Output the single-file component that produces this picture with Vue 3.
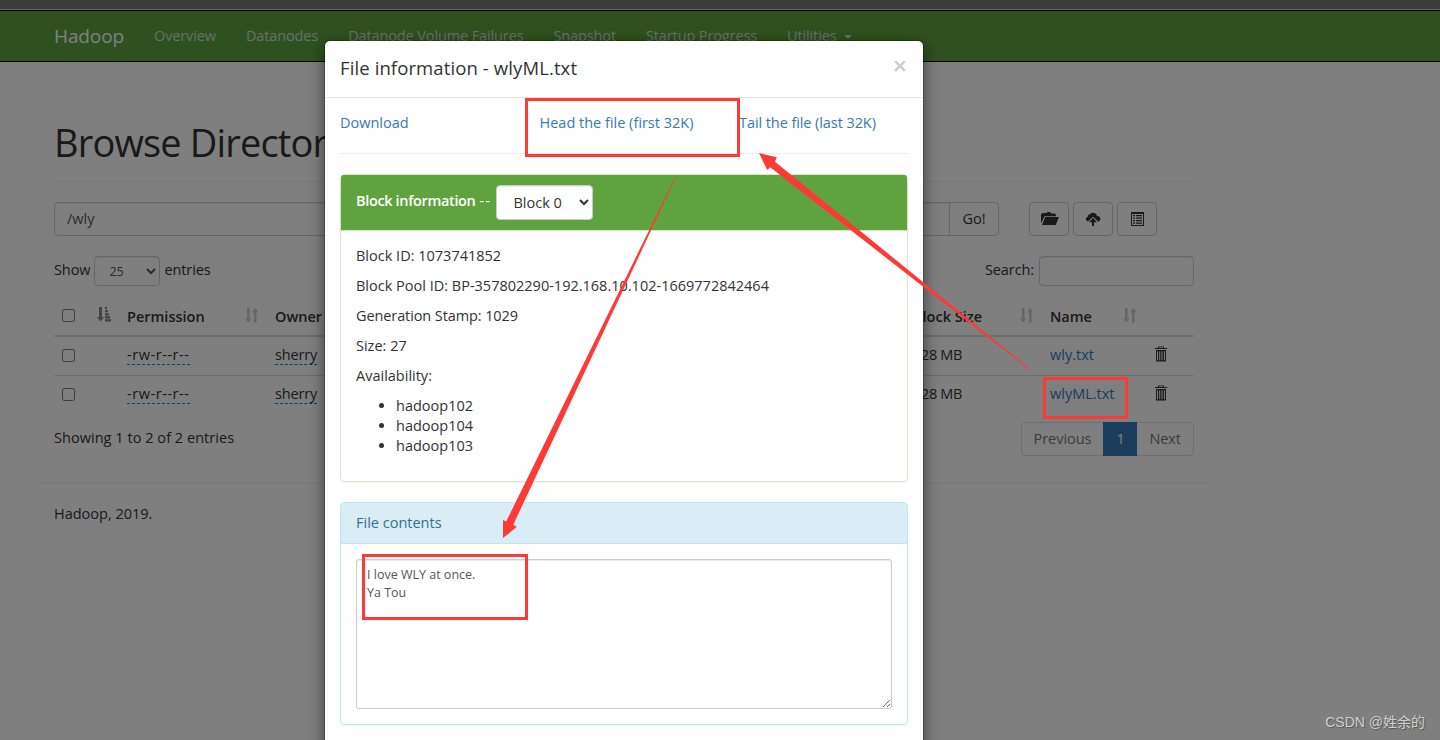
<template>
  <div class="screen">
    <div class="browser-edge"></div>
    <div class="page">
      <nav class="navbar">
        <div class="container nav-inner">
          <a class="brand">Hadoop</a>
          <a v-for="item in navItems" :key="item" class="nav-link">{{ item }}</a>
          <a class="nav-link">Utilities <span class="caret"></span></a>
        </div>
      </nav>

      <div class="container content">
        <h1>Browse Directory</h1>

        <div class="path-row">
          <div class="input-group">
            <input v-model="path" class="form-control" type="text">
            <button class="btn go">Go!</button>
          </div>
          <button class="btn icon-btn">
            <svg width="18" height="14" viewBox="0 0 18 14">
              <path d="M0 11.500V2.500L1.500 1h4L6.500 0h2.500l1 1.500h4L15 3v1.200H3.500z M4.200 5H18l-3.300 8H1z" />
            </svg>
          </button>
          <button class="btn icon-btn cloud">
            <svg width="16" height="16" viewBox="0 0 16 16">
              <path d="M3 10.500A3 3 0 0 1 .8 8.200c0-1.300.8-2.200 2-2.500C2.800 4 3.900 3.100 5.200 3.300 5.900 2.200 7 1.800 8.200 1.800c2 0 3.400 1.300 3.800 3.300 1.900 0 3.400 1.200 3.400 2.900 0 1.200-.8 2.200-2.200 2.500L8 5.800z" />
              <path d="M8 7l4 4.300H9V15H7v-3.700H4z" />
            </svg>
          </button>
          <button class="btn icon-btn">
            <svg width="14" height="15" viewBox="0 0 14 15">
              <path fill-rule="evenodd" d="M0 0h13v14H0z M1 2v11h11V2z" />
              <path d="M2 3h2v1.300H2z M5 3h6v1.300H5z M2 5.500h2v1.300H2z M5 5.500h6v1.300H5z M2 8h2v1.300H2z M5 8h6v1.300H5z M2 10.500h2v1.300H2z M5 10.500h6v1.300H5z" />
            </svg>
          </button>
        </div>

        <div class="table-tools">
          <label>Show
            <select class="form-control small-select"><option>25</option></select>
            entries</label>
          <label class="search">Search: <input class="form-control" type="text"></label>
        </div>

        <table>
          <colgroup>
            <col v-for="(w, i) in columnWidths" :key="i" :style="{ width: w + 'px' }">
          </colgroup>
          <thead>
            <tr>
              <th>
                <input type="checkbox">
                <svg class="sort sorted" width="15" height="15" viewBox="0 0 15 15">
                  <path d="M2 0h3v10h2l-3.500 4.500L0 10h2z M8 0h2v2H8z M8 3h3v2.300H8z M8 6.200h4v2.300H8z M8 9.200h5v2.200H8z M8 12.200h6v2.300H8z" />
                </svg>
              </th>
              <th v-for="(col, i) in columns" :key="i">
                {{ col }}
                <svg v-if="col" class="sort" width="14" height="15" viewBox="0 0 14 15">
                  <path d="M2 0h2.500v10.500h2L3.200 14.500 0 10.500h2z M9 14.500h2.500V4.500h2L10.300 0 7 4.500h2z" />
                </svg>
              </th>
            </tr>
          </thead>
          <tbody>
            <tr v-for="file in files" :key="file.name">
              <td><input type="checkbox"></td>
              <td><span class="editable perm">{{ file.permission }}</span></td>
              <td><span class="editable">{{ file.owner }}</span></td>
              <td></td>
              <td class="block-size">{{ file.blockSize }}</td>
              <td><a>{{ file.name }}</a></td>
              <td>
                <svg class="trash" width="14" height="16" viewBox="0 0 14 16">
                  <path d="M4 2.200V.4h6v1.800H9V1.300H5v.9z M.8 2h12.400v1.100H.8z" />
                  <path fill-rule="evenodd" d="M2 4h10v11.500H2z M3 5.200v9h1v-9z M5.200 5.200v9h1v-9z M7.500 5.200v9h1v-9z M9.900 5.200v9h1v-9z" />
                </svg>
              </td>
            </tr>
          </tbody>
        </table>

        <div class="table-footer">
          <span>Showing 1 to 2 of 2 entries</span>
          <div class="pagination">
            <a>Previous</a><a class="active">1</a><a>Next</a>
          </div>
        </div>
      </div>

      <footer class="container">
        <p>Hadoop, 2019.</p>
      </footer>
    </div>

    <div class="backdrop"></div>

    <div class="modal">
      <div class="modal-header">
        <h4>File information - wlyML.txt</h4>
        <button class="close">×</button>
      </div>
      <div class="modal-body">
        <div class="links">
          <a>Download</a>
          <a>Head the file (first 32K)</a>
          <a class="tail">Tail the file (last 32K)</a>
        </div>
        <hr>
        <div class="panel panel-success">
          <div class="panel-heading">
            <b>Block information</b> <span class="dashes">--</span>
            <select class="form-control block-select"><option>Block 0</option></select>
          </div>
          <div class="panel-body block-info">
            <p>Block ID: 1073741852</p>
            <p>Block Pool ID: BP-357802290-192.168.10.102-1669772842464</p>
            <p class="stamp">Generation Stamp: 1029</p>
            <p>Size: 27</p>
            <p>Availability:</p>
            <ul>
              <li v-for="host in hosts" :key="host">{{ host }}</li>
            </ul>
          </div>
        </div>
        <div class="panel panel-info">
          <div class="panel-heading">File contents</div>
          <div class="panel-body">
            <textarea v-model="contents" spellcheck="false"></textarea>
          </div>
        </div>
      </div>
    </div>

    <!-- annotations -->
    <svg class="marks" width="1440" height="740" viewBox="0 0 1440 740">
      <g fill="none" stroke="#fd3a38" stroke-width="3">
        <rect x="526.5" y="99.5" width="212" height="56" />
        <rect x="1044.5" y="378.5" width="82" height="39" />
        <rect x="363.5" y="555.5" width="163" height="63" />
      </g>
      <g fill="#fd3a38">
        <path d="M759 153L776.700 157.300 775 161.700 1029.500 368.500 1029 369.300 770.200 167.300 767.300 170z" />
        <path d="M503 538V520L506.200 521.500 674.700 178 675.400 178.300 513.300 524.700 516.700 527z" />
      </g>
    </svg>
    <div class="watermark">CSDN @姓余的</div>
  </div>
</template>

<script setup>
import { ref } from 'vue';

const path = ref('/wly');
const contents = ref('I love WLY at once.\nYa Tou');

const navItems = ['Overview', 'Datanodes', 'Datanode Volume Failures', 'Snapshot', 'Startup Progress'];
const columns = ['Permission', 'Owner', '', 'Block Size', 'Name', ''];
const columnWidths = [65, 148, 108, 530, 137, 103, 49];
const hosts = ['hadoop102', 'hadoop104', 'hadoop103'];

const files = ref([
  { permission: '-rw-r--r--', owner: 'sherry', blockSize: '128 MB', name: 'wly.txt' },
  { permission: '-rw-r--r--', owner: 'sherry', blockSize: '128 MB', name: 'wlyML.txt' },
]);
</script>

<style>
body {
  margin: 0;
  overflow: hidden;
}
</style>

<style scoped>
* {
  box-sizing: border-box;
}

.screen {
  position: relative;
  width: 1440px;
  height: 740px;
  overflow: hidden;
  background: #fff;
  color: #333;
  font-family: "Open Sans", "Noto Sans", sans-serif;
  font-size: 14.5px;
  line-height: 20px;
}

.browser-edge {
  height: 10px;
  background: #767676;
  border-bottom: 1px solid #d0d0d0;
}

.container {
  width: 1170px;
  margin-left: 39px;
  padding: 0 15px;
}

.navbar {
  height: 52px;
  background: #5fa33e;
  border: solid #080808;
  border-width: 1px 0;
}

.nav-inner {
  display: flex;
  height: 50px;
  align-items: center;
  gap: 30px;
  letter-spacing: -.12px;
  white-space: nowrap;
}

.nav-link {
  color: #d6dcd2;
}

.nav-inner .brand {
  font-size: 19px;
  color: #fff;
}

.caret {
  display: inline-block;
  margin-left: 4px;
  vertical-align: middle;
  border-top: 4px solid;
  border-left: 4px solid transparent;
  border-right: 4px solid transparent;
}

h1 {
  margin: 0 0 20px;
  padding: 56px 0 15px;
  height: 120px;
  font-size: 38px;
  line-height: 48px;
  font-weight: 400;
  letter-spacing: -.85px;
  border-bottom: 1px solid #eee;
}

.path-row {
  display: flex;
  gap: 4px;
}

.input-group {
  display: flex;
  width: 945px;
  margin-right: 26px;
}

.form-control {
  height: 34px;
  padding: 6px 12px;
  font: inherit;
  color: #555;
  background: #fff;
  border: 1px solid #ccc;
  border-radius: 4px;
  box-shadow: inset 0 1px 1px rgba(0, 0, 0, .075);
}

.input-group .form-control {
  flex: 1;
  padding-bottom: 7px;
  border-radius: 4px 0 0 4px;
}

.btn {
  font: inherit;
  color: #333;
  fill: #333;
  height: 34px;
  padding: 0;
  background: #fff;
  border: 1px solid #ccc;
  border-radius: 4px;
}

.go {
  width: 50px;
  margin-left: -1px;
  border-radius: 0 4px 4px 0;
}

.icon-btn {
  width: 40px;
  display: flex;
  align-items: center;
  justify-content: center;
  padding-left: 2px;
}

.cloud {
  padding-left: 0;
}

.table-tools {
  display: flex;
  justify-content: space-between;
  margin-top: 20px;
  height: 40px;
}

.table-tools label {
  display: flex;
  height: 30px;
  gap: 4px;
  line-height: 28px;
  letter-spacing: -.1px;
}

.table-tools .form-control {
  height: 30px;
  padding: 5px 10px;
  font-size: 12.5px;
}

.small-select {
  width: 66px;
}

label.search {
  gap: 5px;
}

.search .form-control {
  width: 155px;
}

table {
  width: 1140px;
  table-layout: fixed;
  border-collapse: collapse;
}

th {
  height: 40px;
  padding: 9px 8px 7px;
  line-height: 22px;
  text-align: left;
  font-weight: 600;
  border-bottom: 2px solid #ddd;
  white-space: nowrap;
}

td {
  height: 39px;
  padding: 8px;
  vertical-align: top;
  white-space: nowrap;
  border-bottom: 1px solid #ddd;
}

tr:last-child td {
  border-bottom: 0;
}

input[type="checkbox"] {
  width: 13px;
  height: 13px;
  margin: 4px 0 0;
}

td input[type="checkbox"] {
  display: block;
}

.sort {
  float: right;
  margin-top: 2px;
  fill: #ccc;
}

.sorted {
  margin-right: -1px;
  fill: #888;
}

.editable {
  display: inline-block;
  height: 20px;
  letter-spacing: -.15px;
  border-bottom: 1px dashed #08c;
}

.perm {
  letter-spacing: .55px;
}

.block-size {
  letter-spacing: -.35px;
}

a {
  color: #337ab7;
}

.trash {
  display: block;
  margin: 1px 0 0 1px;
  fill: #333;
}

.table-footer {
  display: flex;
  justify-content: space-between;
  padding-top: 8px;
  line-height: 32px;
  letter-spacing: .04px;
}

.pagination {
  display: flex;
  height: 34px;
  letter-spacing: -.05px;
  border: 1px solid #ddd;
  border-radius: 4px;
}

.pagination a {
  padding: 0 12px;
  color: #777;
}

.pagination .active {
  width: 34px;
  margin: -1px 0;
  padding: 1px 13px;
  color: #fff;
  background: #337ab7;
}

footer.container {
  margin-top: 27px;
  border-top: 1px solid #eee;
}

footer p {
  margin: 20px 0;
}

.backdrop {
  position: absolute;
  inset: 0;
  background: rgba(0, 0, 0, .5);
}

.modal {
  position: absolute;
  top: 40px;
  left: 324px;
  width: 600px;
  height: 760px;
  background: #fff;
  background-clip: padding-box;
  border: 1px solid rgba(0, 0, 0, .2);
  border-radius: 6px;
  box-shadow: 0 5px 15px rgba(0, 0, 0, .5);
}

.modal-header {
  display: flex;
  justify-content: space-between;
  height: 57px;
  padding: 15px;
  border-bottom: 1px solid #e5e5e5;
}

h4 {
  margin: 0;
  font-size: 18.5px;
  line-height: 24px;
  font-weight: 400;
  letter-spacing: .11px;
}

.close {
  height: 21px;
  margin: -1px 1px 0 0;
  padding: 0;
  border: 0;
  background: none;
  font: 600 25px/21px "Open Sans", sans-serif;
  color: #ccc;
}

.modal-body {
  padding: 15px;
}

.links {
  display: grid;
  grid-template-columns: 199.5px 199.5px 1fr;
  white-space: nowrap;
}

.tail {
  letter-spacing: -.08px;
}

hr {
  margin: 20px 0;
  border: 0;
  border-top: 1px solid #eee;
}

.panel {
  margin-bottom: 20px;
  border: 1px solid #d6e9c6;
  border-radius: 4px;
  box-shadow: 0 1px 1px rgba(0, 0, 0, .05);
}

.panel-heading {
  padding: 10px 15px;
  border-bottom: 1px solid #d6e9c6;
  border-radius: 3px 3px 0 0;
}

.panel-success .panel-heading {
  display: flex;
  gap: 4px;
  height: 56px;
  padding-top: 10px;
  line-height: 32px;
  color: #fff;
  background: #5fa33e;
}

b {
  font-weight: 600;
  letter-spacing: -.35px;
}

.dashes {
  width: 13px;
  letter-spacing: 1.2px;
}

.block-select {
  width: 97px;
  height: 35px;
  color: #333;
}

.panel-body {
  padding: 15px;
}

.block-info {
  height: 250px;
}

.panel-body p {
  margin: 0 0 10px;
}

.panel-body .stamp {
  letter-spacing: -.1px;
}

ul {
  margin: 0;
  padding-left: 40px;
}

.panel-info {
  border-color: #bce8f1;
}

.panel-info .panel-heading {
  color: #31708f;
  background: #d9edf7;
  border-color: #bce8f1;
}

textarea {
  display: block;
  width: 536px;
  height: 150px;
  padding: 6px 10px;
  font: 12.5px/18px "Open Sans", sans-serif;
  color: #555;
  border: 1px solid #ccc;
  border-radius: 3px;
  box-shadow: inset 0 1px 1px rgba(0, 0, 0, .075);
}

.marks {
  position: absolute;
  top: 0;
  left: 0;
}

.watermark {
  position: absolute;
  right: 15px;
  bottom: 8px;
  font-family: "Liberation Sans", "Noto Sans CJK SC", sans-serif;
  font-size: 14px;
  color: #d0d0d0;
  text-shadow: 1px 1px 1px #555;
}
</style>
